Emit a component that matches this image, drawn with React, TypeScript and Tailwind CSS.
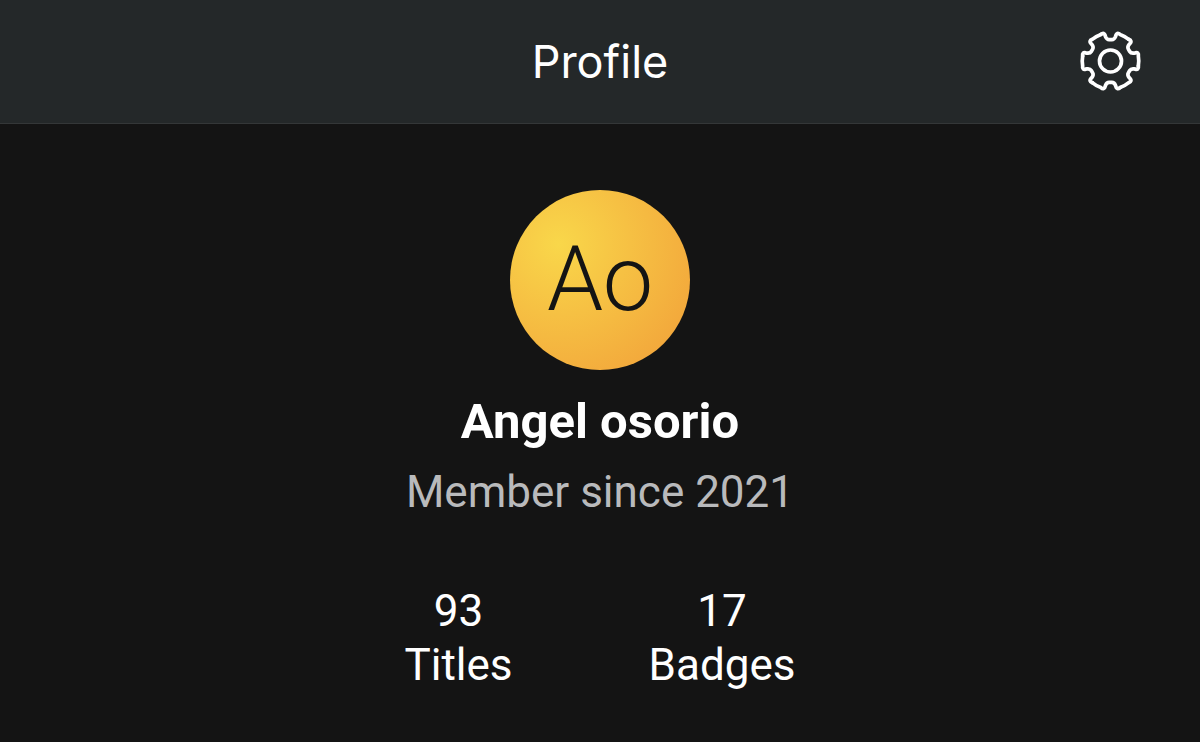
import React from "react";

const STATS = [
  { value: 93, label: "Titles" },
  { value: 17, label: "Badges" },
];

const GEAR_ANGLES = [0, 60, 120, 180, 240, 300];

const GearIcon: React.FC = () => (
  <svg
    className="size-16"
    viewBox="-32.5 -31 64 64"
    fill="none"
    stroke="currentColor"
    strokeWidth="3.7"
    strokeLinecap="round"
    strokeLinejoin="round"
    aria-hidden="true"
  >
    {/* One notch and the tooth next to it, repeated around the centre */}
    {GEAR_ANGLES.map((angle) => (
      <path
        key={angle}
        transform={`rotate(${angle})`}
        d="M-9.6 -26.6C-7.4 -28.6 -5.8 -27.6 -5.4 -25.6L-5 -24.4Q-3.8 -21.4 -1.4 -21.4L1.4 -21.4Q3.8 -21.4 5 -24.4L5.4 -25.6C5.8 -27.6 7.4 -28.6 9.6 -26.6A28.3 28.3 0 0 1 18.2 -21.6"
      />
    ))}
    <circle r="11" />
  </svg>
);

const App: React.FC = () => {
  return (
    <div className="min-h-screen bg-[#141414] text-white font-['Roboto',sans-serif]">
      <header className="grid grid-cols-[1fr_auto_1fr] items-center h-31 px-[58px] bg-[#242829] border-b border-[#343738]">
        <h1 className="col-start-2 text-[45px] leading-none font-['Inter',sans-serif]">
          Profile
        </h1>
        <button
          type="button"
          aria-label="Settings"
          className="justify-self-end cursor-pointer"
        >
          <GearIcon />
        </button>
      </header>

      <main className="flex flex-col items-center pt-[66px] pb-12">
        <div className="flex items-center justify-center size-45 rounded-full bg-[radial-gradient(circle_at_27%_30%,#f9d74a,#f2a33a_90%)]">
          <span className="text-[90px] leading-none font-light text-[#141414]">
            Ao
          </span>
        </div>
        <h2 className="mt-5 text-[49px] leading-16 font-bold">Angel osorio</h2>
        <p className="mt-1 text-[44px] leading-17 text-[#b9babc]">
          Member since 2021
        </p>

        <dl className="flex gap-34 mt-[58px] text-[44px] leading-[54px] text-center">
          {STATS.map((stat) => (
            <div key={stat.label} className="flex flex-col-reverse">
              <dt>{stat.label}</dt>
              <dd>{stat.value}</dd>
            </div>
          ))}
        </dl>
      </main>
    </div>
  );
};

export default App;
